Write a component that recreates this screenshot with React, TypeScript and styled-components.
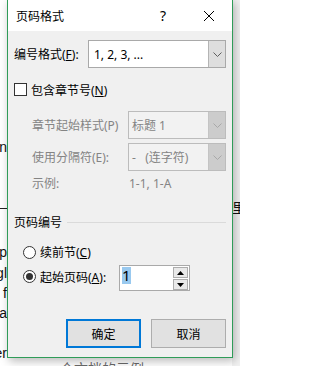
import styled, { createGlobalStyle } from "styled-components";

const GlobalStyle = createGlobalStyle`
  html, body {
    margin: 0;
    padding: 0;
  }
  body {
    font-family: "Noto Sans", "Noto Sans CJK SC", sans-serif;
    font-size: 12px;
    color: #000;
  }
`;

const Chevron = ({ color }: { color: string }) => (
  <svg width="9" height="5" viewBox="0 0 9 5">
    <path d="M0.5 0.5 L4.5 4.5 L8.5 0.5" fill="none" stroke={color} strokeWidth="1" />
  </svg>
);

const CloseIcon = () => (
  <svg width="10" height="10" viewBox="0 0 10 10">
    <path d="M0 0 L10 10 M10 0 L0 10" stroke="#000" strokeWidth="1" />
  </svg>
);

const Arrow = ({ up }: { up?: boolean }) => (
  <svg width="7" height="4" viewBox="0 0 7 4">
    <path d={up ? "M0 4 L3.5 0 L7 4 Z" : "M0 0 L3.5 4 L7 0 Z"} fill="#000" />
  </svg>
);

export default function App() {
  return (
    <>
      <GlobalStyle />
      <Screen>
        <Document>
          <LeftMargin>
            <DocLine $top={139}>n</DocLine>
            <DocRule $top={53} />
            <DocLine $top={35}>p</DocLine>
            <DocLine $top={5}>gl</DocLine>
            <DocLine $top={4}>f</DocLine>
            <DocLine $top={4}>a</DocLine>
            <DocLine $top={24}>er</DocLine>
          </LeftMargin>
          <PageMiddle>
            <BottomText>一个文档的示例</BottomText>
          </PageMiddle>
          <RightMargin>
            <DocLine $top={200} $left>
              里
            </DocLine>
          </RightMargin>
        </Document>

        <Dialog>
          <TitleBar>
            <Title>页码格式</Title>
            <CaptionButton>?</CaptionButton>
            <CaptionButton>
              <CloseIcon />
            </CaptionButton>
          </TitleBar>

          <Body>
            <FieldRow $height={28}>
              <Label $width={74}>
                编号格式(<u>F</u>):
              </Label>
              <Combo>
                <ComboValue>1, 2, 3, ...</ComboValue>
                <DropButton>
                  <Chevron color="#5f5f5f" />
                </DropButton>
              </Combo>
            </FieldRow>

            <FieldRow $height={13} $top={15}>
              <CheckBox />
              <CheckLabel>
                包含章节号(<u>N</u>)
              </CheckLabel>
            </FieldRow>

            <Indented>
              <FieldRow $height={28} $top={15}>
                <Label $disabled>章节起始样式(P)</Label>
                <Combo $disabled>
                  <ComboValue $disabled>标题 1</ComboValue>
                  <DropButton $disabled>
                    <Chevron color="#a8a8a8" />
                  </DropButton>
                </Combo>
              </FieldRow>
              <FieldRow $height={28} $top={4}>
                <Label $disabled>使用分隔符(E):</Label>
                <Combo $disabled>
                  <ComboValue $disabled>-&nbsp;&nbsp;&nbsp;(连字符)</ComboValue>
                  <DropButton $disabled>
                    <Chevron color="#a8a8a8" />
                  </DropButton>
                </Combo>
              </FieldRow>
              <FieldRow $height={16} $top={4}>
                <Label $disabled $width={97}>
                  示例:
                </Label>
                <Label $disabled>1-1, 1-A</Label>
              </FieldRow>
            </Indented>

            <GroupHeader>
              <span>页码编号</span>
              <GroupLine />
            </GroupHeader>

            <RadioRow $height={14} $top={15}>
              <Radio />
              <RadioLabel>
                续前节(<u>C</u>)
              </RadioLabel>
            </RadioRow>
            <RadioRow $height={26} $top={6}>
              <Radio $checked />
              <RadioLabel $width={79}>
                起始页码(<u>A</u>):
              </RadioLabel>
              <SpinBox>
                <SpinText>1</SpinText>
                <SpinButtons>
                  <SpinButton>
                    <Arrow up />
                  </SpinButton>
                  <SpinButton>
                    <Arrow />
                  </SpinButton>
                </SpinButtons>
              </SpinBox>
            </RadioRow>

            <ButtonRow>
              <Button $primary>确定</Button>
              <Button>取消</Button>
            </ButtonRow>
          </Body>
        </Dialog>
      </Screen>
    </>
  );
}

const Screen = styled.div`
  position: relative;
  width: 240px;
  height: 366px;
  overflow: hidden;
  background: #ffffff;
`;

const Document = styled.div`
  display: grid;
  grid-template-columns: 8px 1fr 8px;
  height: 100%;
  font-family: "Liberation Sans", "Noto Sans CJK SC", sans-serif;
  font-size: 14px;
  color: #111;
`;

const LeftMargin = styled.div`
  display: flex;
  flex-direction: column;
  overflow: hidden;
`;

const RightMargin = styled.div`
  display: flex;
  flex-direction: column;
  overflow: hidden;
  background: #f2f2f2;
`;

const PageMiddle = styled.div`
  display: flex;
  flex-direction: column;
  justify-content: flex-end;
  padding-left: 38px;
`;

const BottomText = styled.div`
  height: 6px;
  line-height: 18px;
  overflow: hidden;
  color: #6a6a6a;
`;

const DocLine = styled.div<{ $top: number; $left?: boolean }>`
  display: flex;
  justify-content: ${(p) => (p.$left ? "flex-start" : "flex-end")};
  height: 16px;
  line-height: 16px;
  margin-top: ${(p) => p.$top}px;
  padding-right: ${(p) => (p.$left ? 0 : 1)}px;
  white-space: nowrap;
`;

const DocRule = styled.div<{ $top: number }>`
  height: 1px;
  margin-top: ${(p) => p.$top}px;
  background: #222;
`;

const Dialog = styled.div`
  position: absolute;
  left: 7px;
  top: -1px;
  width: 226px;
  height: 359px;
  box-sizing: border-box;
  border: 1px solid #2f9c58;
  background: #f0f0f0;
  display: flex;
  flex-direction: column;
  box-shadow: 2px 3px 9px rgba(0, 0, 0, 0.28);
`;

const TitleBar = styled.div`
  height: 31px;
  flex-shrink: 0;
  display: flex;
  align-items: center;
  background: #ffffff;
  padding-left: 8px;
`;

const Title = styled.div`
  flex: 1;
  font-size: 12px;
`;

const CaptionButton = styled.div`
  width: 46px;
  height: 31px;
  display: flex;
  align-items: center;
  justify-content: center;
  font-size: 14px;
`;

const Body = styled.div`
  flex: 1;
  display: flex;
  flex-direction: column;
  padding: 9px 6px 9px 6px;
`;

const FieldRow = styled.div<{ $height: number; $top?: number }>`
  display: flex;
  align-items: center;
  height: ${(p) => p.$height}px;
  margin-top: ${(p) => p.$top ?? 0}px;
`;

const Label = styled.div<{ $width?: number; $disabled?: boolean }>`
  ${(p) => (p.$width ? `width: ${p.$width}px; flex-shrink: 0;` : "flex: 1;")}
  color: ${(p) => (p.$disabled ? "#848484" : "#000")};
  white-space: nowrap;
`;

const Combo = styled.div<{ $disabled?: boolean }>`
  width: ${(p) => (p.$disabled ? "98px" : "auto")};
  flex: ${(p) => (p.$disabled ? "none" : "1")};
  height: 100%;
  box-sizing: border-box;
  display: flex;
  align-items: stretch;
  border: 1px solid ${(p) => (p.$disabled ? "#bcbcbc" : "#a9a9a9")};
  background: ${(p) => (p.$disabled ? "#f2f2f2" : "#ffffff")};
`;

const ComboValue = styled.div<{ $disabled?: boolean }>`
  flex: 1;
  display: flex;
  align-items: center;
  padding-left: ${(p) => (p.$disabled ? 3 : 5)}px;
  color: ${(p) => (p.$disabled ? "#848484" : "#000")};
  white-space: nowrap;
`;

const DropButton = styled.div<{ $disabled?: boolean }>`
  width: 17px;
  display: flex;
  align-items: center;
  justify-content: center;
  box-sizing: border-box;
  background: ${(p) => (p.$disabled ? "#cccccc" : "#dedede")};
  border-left: 1px solid ${(p) => (p.$disabled ? "#c4c4c4" : "#b4b4b4")};
`;

const CheckBox = styled.div`
  width: 13px;
  height: 13px;
  box-sizing: border-box;
  border: 1px solid #333;
  background: #ffffff;
  flex-shrink: 0;
`;

const CheckLabel = styled.div`
  margin-left: 4px;
  white-space: nowrap;
`;

const Indented = styled.div`
  display: flex;
  flex-direction: column;
  padding-left: 18px;
`;

const GroupHeader = styled.div`
  display: flex;
  align-items: center;
  height: 16px;
  margin-top: 23px;
`;

const GroupLine = styled.div`
  flex: 1;
  height: 1px;
  margin-left: 5px;
  background: #dadada;
`;

const RadioRow = styled(FieldRow)`
  padding-left: 9px;
`;

const Radio = styled.div<{ $checked?: boolean }>`
  width: 13px;
  height: 13px;
  box-sizing: border-box;
  border: 1px solid #333;
  border-radius: 50%;
  background: #ffffff;
  flex-shrink: 0;
  display: flex;
  align-items: center;
  justify-content: center;
  margin-top: ${(p) => (p.$checked ? "-3px" : "0")};

  &::after {
    content: "";
    display: ${(p) => (p.$checked ? "block" : "none")};
    width: 7px;
    height: 7px;
    border-radius: 50%;
    background: #333;
  }
`;

const RadioLabel = styled.div<{ $width?: number }>`
  margin-left: 4px;
  white-space: nowrap;
  ${(p) => (p.$width ? `width: ${p.$width}px;` : "")}
  margin-top: ${(p) => (p.$width ? "-3px" : "0")};
`;

const SpinBox = styled.div`
  width: 71px;
  height: 26px;
  box-sizing: border-box;
  border: 1px solid #a9a9a9;
  background: #ffffff;
  display: flex;
  padding: 1px 1px 0 2px;
`;

const SpinText = styled.div`
  align-self: flex-start;
  height: 17px;
  line-height: 17px;
  font-size: 15px;
  background: #99c9ef;
  color: #000;
`;

const SpinButtons = styled.div`
  margin-left: auto;
  display: flex;
  flex-direction: column;
  gap: 1px;
`;

const SpinButton = styled.div`
  width: 15px;
  height: 11px;
  box-sizing: border-box;
  border: 1px solid #adadad;
  background: #e9e9e9;
  display: flex;
  align-items: center;
  justify-content: center;
`;

const ButtonRow = styled.div`
  display: flex;
  justify-content: flex-end;
  gap: 10px;
  margin-top: 28px;
`;

const Button = styled.div<{ $primary?: boolean }>`
  width: 75px;
  height: 29px;
  box-sizing: border-box;
  display: flex;
  align-items: center;
  justify-content: center;
  background: #e1e1e1;
  border: ${(p) => (p.$primary ? "2px solid #0078d7" : "1px solid #adadad")};
`;
